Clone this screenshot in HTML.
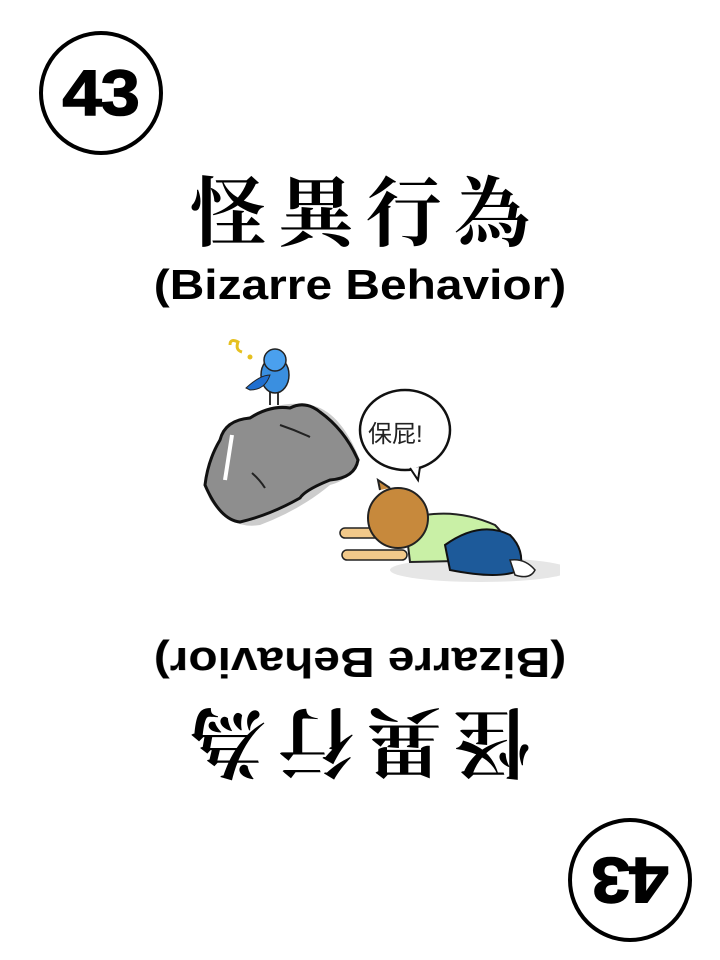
<!DOCTYPE html>
<html><head><meta charset="utf-8"><style>
html,body{margin:0;padding:0;background:#fff}
body{width:720px;height:960px;position:relative;overflow:hidden}
.half{position:absolute;left:0;top:0;width:720px;height:960px}
.circ{position:absolute;width:116px;height:116px;border:4px solid #000;border-radius:50%;text-align:center;font-family:"Liberation Sans",sans-serif;font-weight:bold;font-size:64px;line-height:116px;letter-spacing:-1px;-webkit-text-stroke:1.5px #000}
.circ span{display:inline-block;transform:scaleX(1.1)}
.title{position:absolute;left:0;width:720px;text-align:center;font-family:"Noto Serif CJK SC","Noto Sans CJK TC",serif;font-weight:700;font-size:76px;letter-spacing:12px;text-indent:12px;line-height:90px;height:90px}
.sub{position:absolute;left:0;width:720px;text-align:center;font-family:"Liberation Sans",sans-serif;font-weight:bold;font-size:42px;line-height:50px;height:50px;transform:scaleX(1.14)}
.rot{transform:rotate(180deg)}
</style></head><body>
<div class="half">
<div class="circ" style="left:39px;top:31px"><span>43</span></div>
<div class="title" style="top:163px">怪異行為</div>
<div class="sub" style="top:260px">(Bizarre Behavior)</div>
</div>
<div class="half rot">
<div class="circ" style="left:28px;top:18px"><span>43</span></div>
<div class="title" style="top:168px">怪異行為</div>
<div class="sub" style="top:273px">(Bizarre Behavior)</div>
</div>
<svg style="position:absolute;left:180px;top:330px" width="380" height="270" viewBox="0 0 380 270">
<path d="M30 170 Q20 150 40 120 Q45 90 75 85 Q100 70 130 75 Q160 80 180 130 Q170 150 150 155 Q120 180 80 195 Q50 200 30 170Z" fill="#ccc"/>
<path d="M25 155 Q28 130 40 110 Q45 90 70 88 Q90 75 110 78 Q125 70 140 82 Q165 100 178 130 Q175 148 150 150 Q125 160 120 168 Q90 185 60 192 Q40 190 25 155Z" fill="#8e8e8e" stroke="#111" stroke-width="3"/>
<path d="M52 105 L45 150" stroke="#fff" stroke-width="4" fill="none"/>
<path d="M100 95 Q115 100 130 107 M72 143 Q80 150 85 158" stroke="#222" stroke-width="2" fill="none"/>
<path d="M90 75 L90 62 M98 75 L98 62" stroke="#333" stroke-width="2"/>
<ellipse cx="95" cy="45" rx="14" ry="18" fill="#3a8fe0" stroke="#222" stroke-width="1.5"/>
<circle cx="95" cy="30" r="11" fill="#4aa0ee" stroke="#222" stroke-width="1.5"/>
<path d="M66 58 Q80 45 90 45 Q85 60 70 60Z" fill="#1f6fd0" stroke="#222"/>
<path d="M50 15 Q50 8 58 12 Q55 20 62 22" stroke="#e6c020" stroke-width="3" fill="none"/>
<circle cx="70" cy="27" r="2.5" fill="#e6c020"/>
<ellipse cx="225" cy="100" rx="45" ry="40" fill="#fff" stroke="#111" stroke-width="2.5"/>
<path d="M230 138 L238 150 L240 137" fill="#fff" stroke="#111" stroke-width="2"/>
<text x="188" y="112" font-family="'WenQuanYi Zen Hei',sans-serif" font-size="24" fill="#222">保屁!</text>
<ellipse cx="300" cy="240" rx="90" ry="12" fill="#e6e6e6"/>
<rect x="160" y="198" width="60" height="10" rx="5" fill="#f2c98a" stroke="#222" stroke-width="1.5"/>
<rect x="162" y="220" width="65" height="10" rx="5" fill="#f2c98a" stroke="#222" stroke-width="1.5"/>
<path d="M225 190 Q270 175 315 195 Q335 215 320 230 L230 232Z" fill="#c9f0a6" stroke="#222" stroke-width="2"/>
<path d="M265 215 Q300 190 330 205 Q345 220 340 240 Q320 250 270 240Z" fill="#1d5a9a" stroke="#111" stroke-width="2"/>
<path d="M330 230 Q345 228 355 240 Q350 250 335 245Z" fill="#fff" stroke="#222" stroke-width="1.5"/>
<circle cx="218" cy="188" r="30" fill="#c7893c" stroke="#222" stroke-width="2"/>
<path d="M200 160 L198 150 L210 158" fill="#c7893c" stroke="#222" stroke-width="2"/>
</svg>
</body></html>
